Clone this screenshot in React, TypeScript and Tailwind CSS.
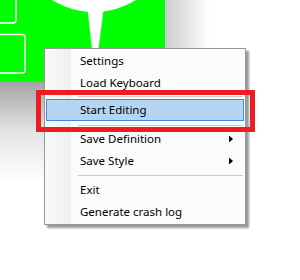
import React from 'react';

type Item = { label: string; sub?: boolean; active?: boolean } | { sep: number; line: number };

const items: Item[] = [
  { label: 'Settings' },
  { label: 'Load Keyboard' },
  { sep: 5, line: 2 },
  { label: 'Start Editing', active: true },
  { sep: 7, line: 4 },
  { label: 'Save Definition', sub: true },
  { label: 'Save Style', sub: true },
  { sep: 7, line: 3 },
  { label: 'Exit' },
  { label: 'Generate crash log' },
];

const Arrow = () => (
  <svg width="4" height="7" viewBox="0 0 4 7" className="absolute right-[12px] top-1/2 -translate-y-1/2">
    <path d="M0 0 L4 3.5 L0 7 Z" fill="#000" />
  </svg>
);

const App: React.FC = () => {
  return (
    <div className="relative w-[300px] h-[280px] overflow-hidden bg-white" style={{ fontFamily: '"Noto Sans", "Open Sans", sans-serif' }}>
      {/* keyboard window behind the menu */}
      <div className="flex h-[82px]">
        <div className="w-[165px] h-full bg-[#00ff00]">
          <svg width="165" height="82" viewBox="0 0 165 82">
            <rect x="-10" y="-10" width="26" height="33" rx="3" fill="none" stroke="#fff" strokeWidth="1.5" />
            <rect x="-10" y="34.5" width="35" height="38.5" rx="3" fill="none" stroke="#fff" strokeWidth="1.5" />
            <circle cx="94" cy="-67" r="79" fill="#fff" />
            <path d="M87.5 10 L103.5 10 L98.5 49 L92 49 Z" fill="#fff" />
          </svg>
        </div>
        <div className="w-[45px] h-full bg-gradient-to-r from-[#cdcdcd] to-white" />
      </div>
      <div className="w-[165px] h-[100px] bg-gradient-to-b from-[#a6a6a6] via-[#e4e4e4] to-white" />

      {/* context menu */}
      <div className="absolute left-[44px] top-[48px] w-[202px] border border-[#979797] bg-[#fbfbfb] pt-[1px] pb-[1px] shadow-[3px_3px_2px_rgba(0,0,0,0.4)]">
        <div className="absolute left-0 top-0 bottom-0 w-[26px] bg-gradient-to-r from-[#f9f9f9] to-[#efefef]" />
        <div className="relative flex flex-col text-[11.5px] text-black">
          {items.map((it, i) =>
            'sep' in it ? (
              <div key={i} className="relative" style={{ height: it.sep }}>
                <div className="absolute left-[33px] right-[2px] h-px bg-[#c8c8c8]" style={{ top: it.line }} />
              </div>
            ) : (
              <div key={i} className="relative h-[22px] flex items-center">
                {it.active && (
                  <div className="absolute left-[1px] right-[1px] top-0 bottom-0 bg-[#b5d5f3] border border-[#3a8ee0]" />
                )}
                <span className="relative pl-[35px] leading-none">{it.label}</span>
                {it.sub && <Arrow />}
              </div>
            )
          )}
        </div>
      </div>

      {/* annotation box */}
      <div className="absolute left-[36px] top-[90px] w-[219px] h-[42px] border-[5px] border-[#ed1c24]" />
    </div>
  );
};

export default App;
